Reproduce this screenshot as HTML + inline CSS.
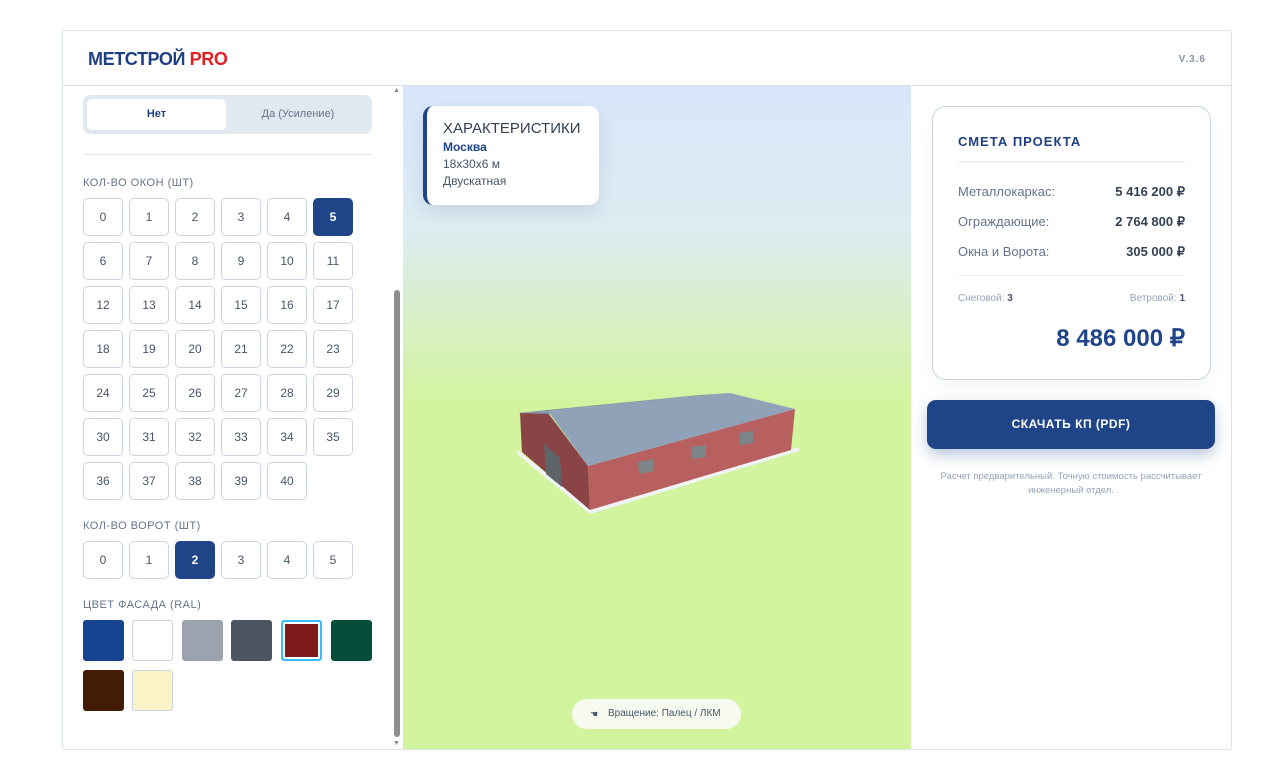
<!DOCTYPE html>
<html><head><meta charset="utf-8"><style>
*{box-sizing:border-box;margin:0;padding:0}
body{width:1283px;height:784px;background:#fff;font-family:"Liberation Sans",sans-serif;position:relative;overflow:hidden;color:#334155}
.wrap{position:absolute;left:62px;top:30px;width:1170px;height:720px;border:1px solid #dde3ea;border-radius:3px}
.hdr{position:absolute;left:0;top:0;width:1168px;height:55px;border-bottom:1px solid #d6dde6}
.logo{position:absolute;left:25px;top:18px;font-size:18px;font-weight:bold;color:#1f3f84;letter-spacing:-0.4px}
.logo span{color:#e31e24}
.ver{position:absolute;right:25px;top:23px;font-size:10px;color:#8a94a3;font-weight:bold;letter-spacing:1px}
.a{position:absolute}
.seg{left:83px;top:95px;width:289px;height:39px;background:#e2e8f0;border-radius:7px}
.seg .on{position:absolute;left:4px;top:4px;width:139px;height:31px;background:#fff;border-radius:5px;font-size:11px;font-weight:bold;color:#1f3f84;text-align:center;line-height:31px}
.seg .off{position:absolute;left:145px;top:4px;width:140px;height:31px;font-size:11px;color:#64748b;text-align:center;line-height:31px}
.lbl{font-size:11px;color:#64748b;letter-spacing:0.5px}
.b{position:absolute;width:40px;height:38px;border:1px solid #cbd5e1;border-radius:5px;background:#fff;font-size:12px;color:#475569;text-align:center;line-height:36px}
.b.s{background:#1f4488;border-color:#1f4488;color:#fff;font-weight:bold}
.sw{position:absolute;width:41px;height:41px;border-radius:3px;border:1px solid #cbd5e1}
.vp{left:403px;top:86px;width:508px;height:663px;background:linear-gradient(180deg,#d9e6fb 0%,#dcecf0 22%,#d2f49e 48%,#d2f49e 100%)}
.card{left:423px;top:106px;width:176px;height:99px;background:#fff;border-radius:10px;border-left:4px solid #1f4488;box-shadow:0 6px 16px rgba(30,60,120,.12);padding:14px 0 0 16px}
.pill{left:572px;top:699px;width:169px;height:30px;background:#f7fbef;border-radius:15px;font-size:10px;color:#475569;line-height:30px;padding-left:36px}
.est{left:932px;top:106px;width:279px;height:274px;border:1px solid #c8d3e4;border-radius:14px;background:#fff;box-shadow:0 8px 20px rgba(0,0,0,.04)}
.row{position:absolute;left:25px;right:25px;font-size:13px;color:#64748b}
.row b{position:absolute;right:0;color:#334155}
.btn{left:927px;top:400px;width:288px;height:49px;background:#1f4488;border-radius:9px;color:#fff;font-size:12px;font-weight:bold;text-align:center;line-height:49px;letter-spacing:0.5px;box-shadow:0 6px 14px rgba(31,68,136,.3)}
</style></head><body>
<div class="wrap"><div class="hdr"><div class="logo">МЕТСТРОЙ <span>PRO</span></div><div class="ver">V.3.6</div></div></div>

<div class="a seg"><div class="on">Нет</div><div class="off">Да (Усиление)</div></div>
<div class="a" style="left:83px;top:154px;width:289px;height:1px;background:#e2e8f0"></div>
<div class="a lbl" style="left:83px;top:177px">КОЛ-ВО ОКОН (ШТ)</div>
<div class="a lbl" style="left:83px;top:520px">КОЛ-ВО ВОРОТ (ШТ)</div>
<div class="a lbl" style="left:83px;top:599px">ЦВЕТ ФАСАДА (RAL)</div>
<div class="b" style="left:83px;top:198px">0</div><div class="b" style="left:129px;top:198px">1</div><div class="b" style="left:175px;top:198px">2</div><div class="b" style="left:221px;top:198px">3</div><div class="b" style="left:267px;top:198px">4</div><div class="b s" style="left:313px;top:198px">5</div>
<div class="b" style="left:83px;top:242px">6</div><div class="b" style="left:129px;top:242px">7</div><div class="b" style="left:175px;top:242px">8</div><div class="b" style="left:221px;top:242px">9</div><div class="b" style="left:267px;top:242px">10</div><div class="b" style="left:313px;top:242px">11</div>
<div class="b" style="left:83px;top:286px">12</div><div class="b" style="left:129px;top:286px">13</div><div class="b" style="left:175px;top:286px">14</div><div class="b" style="left:221px;top:286px">15</div><div class="b" style="left:267px;top:286px">16</div><div class="b" style="left:313px;top:286px">17</div>
<div class="b" style="left:83px;top:330px">18</div><div class="b" style="left:129px;top:330px">19</div><div class="b" style="left:175px;top:330px">20</div><div class="b" style="left:221px;top:330px">21</div><div class="b" style="left:267px;top:330px">22</div><div class="b" style="left:313px;top:330px">23</div>
<div class="b" style="left:83px;top:374px">24</div><div class="b" style="left:129px;top:374px">25</div><div class="b" style="left:175px;top:374px">26</div><div class="b" style="left:221px;top:374px">27</div><div class="b" style="left:267px;top:374px">28</div><div class="b" style="left:313px;top:374px">29</div>
<div class="b" style="left:83px;top:418px">30</div><div class="b" style="left:129px;top:418px">31</div><div class="b" style="left:175px;top:418px">32</div><div class="b" style="left:221px;top:418px">33</div><div class="b" style="left:267px;top:418px">34</div><div class="b" style="left:313px;top:418px">35</div>
<div class="b" style="left:83px;top:462px">36</div><div class="b" style="left:129px;top:462px">37</div><div class="b" style="left:175px;top:462px">38</div><div class="b" style="left:221px;top:462px">39</div><div class="b" style="left:267px;top:462px">40</div>
<div class="b" style="left:83px;top:541px">0</div><div class="b" style="left:129px;top:541px">1</div><div class="b s" style="left:175px;top:541px">2</div><div class="b" style="left:221px;top:541px">3</div><div class="b" style="left:267px;top:541px">4</div><div class="b" style="left:313px;top:541px">5</div>
<div class="sw" style="left:83px;top:620px;background:#174491;border-color:#174491"></div>
<div class="sw" style="left:132px;top:620px;background:#fff"></div>
<div class="sw" style="left:182px;top:620px;background:#9ca3af;border-color:#9ca3af"></div>
<div class="sw" style="left:231px;top:620px;background:#4b5563;border-color:#4b5563"></div>
<div class="sw" style="left:281px;top:620px;background:#7f1a1a;border:2px solid #38bdf8;box-shadow:inset 0 0 0 2px #fff"></div>
<div class="sw" style="left:331px;top:620px;background:#064e3b;border-color:#064e3b"></div>
<div class="sw" style="left:83px;top:670px;background:#441b04;border-color:#441b04"></div>
<div class="sw" style="left:132px;top:670px;background:#fdf3c8"></div>
<div class="a" style="left:394px;top:290px;width:6px;height:447px;background:#8e8e8e;border-radius:3px"></div>
<div class="a" style="left:393px;top:87px;font-size:7px;color:#888">▲</div>
<div class="a" style="left:393px;top:740px;font-size:7px;color:#888">▼</div>

<div class="a vp"></div>
<svg class="a" style="left:0;top:0" width="1283" height="784">
<polygon points="517,450 590,508 799,447 799,451 590,514 517,454" fill="#f1f3f7"/>
<polygon points="520,413 548,413 588,466 590,510 522,452" fill="#8a4446"/>
<polygon points="588,466 795,409 791,450 590,510" fill="#b85f5f"/>
<polygon points="544,444 560,458 562,487 546,474" fill="#5f6468"/>
<polygon points="638,462 654,459 654,471 639,474" fill="#7c8588"/>
<polygon points="691,447 706,445 706,457 692,459" fill="#7c8588"/>
<polygon points="739,433 753,431 753,443 740,445" fill="#7c8588"/>
<polygon points="548,411 730,393 795,409 588,466" fill="#8fa2b7"/>
<polygon points="517,413 700,395 730,393 548,411" fill="#8294ab"/>
<polygon points="517,413 548,411 550,414" fill="#8294ab"/>
</svg>
<div class="a card"><div style="font-size:15px;color:#334155">ХАРАКТЕРИСТИКИ</div><div style="font-size:12px;font-weight:bold;color:#1f4488;margin-top:3px">Москва</div><div style="font-size:12px;color:#475569;margin-top:3px">18x30x6 м</div><div style="font-size:12px;color:#475569;margin-top:3px">Двускатная</div></div>
<div class="a pill"><span style="position:absolute;left:18px;font-size:9px">☚</span>Вращение: Палец / ЛКМ</div>

<div class="a est">
<div style="position:absolute;left:25px;top:27px;font-size:13px;font-weight:bold;color:#1f3f84;letter-spacing:1px">СМЕТА ПРОЕКТА</div>
<div style="position:absolute;left:25px;right:25px;top:54px;height:2px;background:#eef2f7"></div>
<div class="row" style="top:77px">Металлокаркас:<b>5 416 200 ₽</b></div>
<div class="row" style="top:107px">Ограждающие:<b>2 764 800 ₽</b></div>
<div class="row" style="top:137px">Окна и Ворота:<b>305 000 ₽</b></div>
<div style="position:absolute;left:25px;right:25px;top:168px;height:1px;background:#eef2f7"></div>
<div class="row" style="top:186px;font-size:10px;color:#94a3b8">Снеговой: <span style="color:#475569;font-weight:bold">3</span><span style="position:absolute;right:0">Ветровой: <span style="color:#475569;font-weight:bold">1</span></span></div>
<div style="position:absolute;right:25px;top:217px;font-size:24px;font-weight:bold;color:#1f4488">8 486 000 ₽</div>
</div>
<div class="a btn">СКАЧАТЬ КП (PDF)</div>
<div class="a" style="left:922px;top:470px;width:298px;text-align:center;font-size:9.5px;color:#94a3b8;line-height:14px">Расчет предварительный. Точную стоимость рассчитывает инженерный отдел.</div>
</body></html>
